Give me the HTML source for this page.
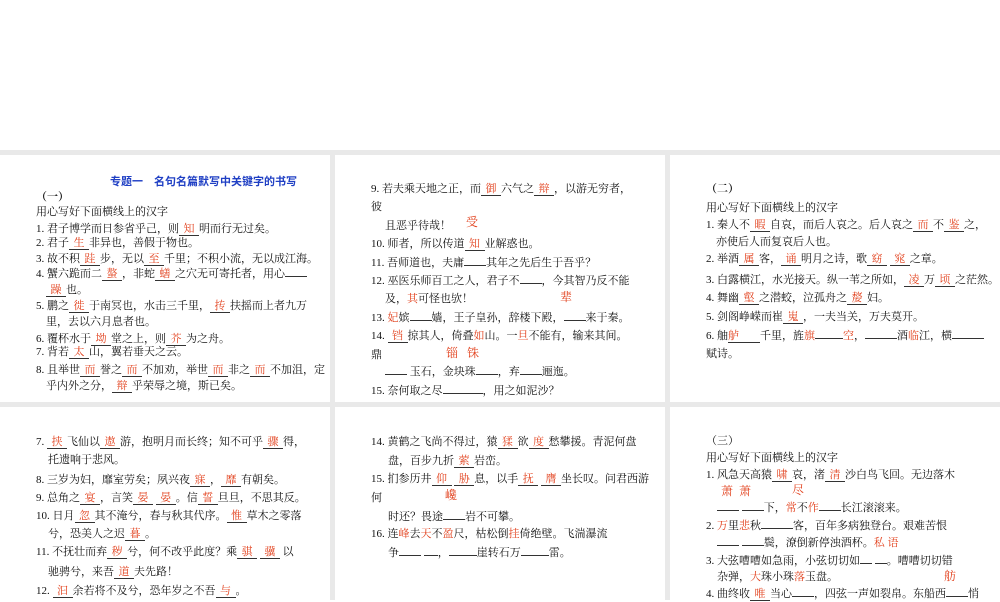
<!DOCTYPE html>
<html><head><meta charset="utf-8">
<style>
html,body{margin:0;padding:0;}
body{width:1000px;height:600px;position:relative;overflow:hidden;background:#fff;
font-family:"Liberation Serif","Noto Serif CJK SC","Noto Sans CJK SC",serif;font-size:11px;color:#111;}
.bg{position:absolute;left:0;top:150px;width:1000px;height:450px;background:#e9e9e9;}
.p{position:absolute;background:#fff;}
.l{position:absolute;white-space:nowrap;line-height:16px;height:16px;}
.r{color:#e2401c;}
.u{display:inline-block;border-bottom:1px solid #333;line-height:12px;padding:0 3px;min-width:14px;text-align:center;color:#e2401c;}
.b{display:inline-block;border-bottom:1px solid #333;line-height:12px;min-width:22px;}
.t{color:#1f3fc4;font-weight:bold;font-family:"Liberation Sans","Noto Sans CJK SC",sans-serif;}
</style></head><body>
<div class="bg"></div>
<div class="p" style="left:0;top:155px;width:330px;height:247px"></div>
<div class="p" style="left:335px;top:155px;width:330px;height:247px"></div>
<div class="p" style="left:670px;top:155px;width:330px;height:247px"></div>
<div class="p" style="left:0;top:407px;width:330px;height:193px"></div>
<div class="p" style="left:335px;top:407px;width:330px;height:193px"></div>
<div class="p" style="left:670px;top:407px;width:330px;height:193px"></div>

<!-- panel 1 -->
<div class="l t" style="left:110px;top:174px">专题一　名句名篇默写中关键字的书写</div>
<div class="l" style="left:36px;top:189px;font-weight:bold">（一）</div>
<div class="l" style="left:36px;top:204px">用心写好下面横线上的汉字</div>
<div class="l" style="left:36px;top:221px">1. 君子博学而日参省乎己，则<span class="u">知</span>明而行无过矣。</div>
<div class="l" style="left:36px;top:235px">2. 君子<span class="u">生</span>非异也，善假于物也。</div>
<div class="l" style="left:36px;top:251px">3. 故不积<span class="u">跬</span>步，无以<span class="u">至</span>千里；不积小流，无以成江海。</div>
<div class="l" style="left:36px;top:266px">4. 蟹六跪而二<span class="u">螯</span>，非蛇<span class="u">蟮</span>之穴无可寄托者，用心<span class="b"></span></div>
<div class="l" style="left:46px;top:282px"><span class="u">躁</span>也。</div>
<div class="l" style="left:36px;top:298px">5. 鹏之<span class="u">徙</span>于南冥也，水击三千里，<span class="u">抟</span>扶摇而上者九万</div>
<div class="l" style="left:46px;top:314px">里，去以六月息者也。</div>
<div class="l" style="left:36px;top:331px">6. 覆杯水于<span class="u">坳</span>堂之上，则<span class="u">芥</span>为之舟。</div>
<div class="l" style="left:36px;top:344px">7. 背若<span class="u">太</span>山，翼若垂天之云。</div>
<div class="l" style="left:36px;top:362px">8. 且举世<span class="u">而</span>誉之<span class="u">而</span>不加劝，举世<span class="u">而</span>非之<span class="u">而</span>不加沮，定</div>
<div class="l" style="left:46px;top:378px">乎内外之分，<span class="u">辩</span>乎荣辱之境，斯已矣。</div>

<!-- panel 2 -->
<div class="l" style="left:371px;top:181px">9. 若夫乘天地之正，而<span class="u">御</span>六气之<span class="u">辩</span>，以游无穷者，</div>
<div class="l" style="left:371px;top:199px">彼</div>
<div class="l" style="left:385px;top:218px">且恶乎待哉！</div>
<div class="l r" style="left:466px;top:214px;font-size:12px">受</div>
<div class="l" style="left:371px;top:236px">10. 师者，所以传道<span class="u">知</span>业解惑也。</div>
<div class="l" style="left:371px;top:255px">11. 吾师道也，夫庸<span class="b"></span>其年之先后生于吾乎？</div>
<div class="l" style="left:371px;top:273px">12. 巫医乐师百工之人，君子不<span class="b"></span>，今其智乃反不能</div>
<div class="l" style="left:385px;top:291px">及，<span class="r">其</span>可怪也欤！</div>
<div class="l r" style="left:560px;top:289px;font-size:12px">辈</div>
<div class="l" style="left:371px;top:310px">13. <span class="r">妃</span>嫔<span class="b"></span>嫱，王子皇孙，辞楼下殿，<span class="b"></span>来于秦。</div>
<div class="l" style="left:371px;top:328px">14. <span class="u">铛</span>掠其人，倚叠<span class="r">如</span>山。一<span class="r">旦</span>不能有，输来其间。</div>
<div class="l" style="left:371px;top:347px">鼎</div>
<div class="l r" style="left:446px;top:345px;font-size:12px">锱&nbsp;&nbsp;&nbsp;铢</div>
<div class="l" style="left:385px;top:364px"><span class="b"></span> 玉石，金块珠<span class="b"></span>，弃<span class="b"></span>逦迤。</div>
<div class="l" style="left:371px;top:383px">15. 奈何取之尽<span class="b" style="min-width:40px"></span>，用之如泥沙？</div>

<!-- panel 3 -->
<div class="l" style="left:706px;top:181px;font-weight:bold">（二）</div>
<div class="l" style="left:706px;top:200px">用心写好下面横线上的汉字</div>
<div class="l" style="left:706px;top:217px">1. 秦人不<span class="u">暇</span>自哀，而后人哀之。后人哀之<span class="u">而</span>不<span class="u">鉴</span>之，</div>
<div class="l" style="left:716px;top:234px">亦使后人而复哀后人也。</div>
<div class="l" style="left:706px;top:251px">2. 举酒<span class="u">属</span>客，<span class="u">诵</span>明月之诗，歌<span class="u">窈</span> <span class="u">窕</span>之章。</div>
<div class="l" style="left:706px;top:272px">3. 白露横江，水光接天。纵一苇之所如，<span class="u">凌</span>万<span class="u">顷</span>之茫然。</div>
<div class="l" style="left:706px;top:290px">4. 舞幽<span class="u">壑</span>之潜蛟，泣孤舟之<span class="u">嫠</span>妇。</div>
<div class="l" style="left:706px;top:309px">5. 剑阁峥嵘而崔<span class="u">嵬</span>，一夫当关，万夫莫开。</div>
<div class="l" style="left:706px;top:328px">6. 舳<span class="b" style="min-width:32px"><span class="r">舻</span></span>千里，旌<span class="r">旗</span><span class="b" style="min-width:28px"></span><span class="r">空</span>，<span class="b" style="min-width:32px"></span>酒<span class="r">临</span>江，横<span class="b" style="min-width:32px"></span></div>
<div class="l" style="left:706px;top:346px">赋诗。</div>

<!-- row 2 panel 1 -->
<div class="l" style="left:36px;top:434px">7. <span class="u">挟</span>飞仙以<span class="u">遨</span>游，抱明月而长终；知不可乎<span class="u">骤</span>得，</div>
<div class="l" style="left:48px;top:452px">托遗响于悲风。</div>
<div class="l" style="left:36px;top:472px">8. 三岁为妇，靡室劳矣；夙兴夜<span class="u">寐</span>，<span class="u">靡</span>有朝矣。</div>
<div class="l" style="left:36px;top:490px">9. 总角之<span class="u">宴</span>，言笑<span class="u">晏</span> <span class="u">晏</span>。信<span class="u">誓</span>旦旦，不思其反。</div>
<div class="l" style="left:36px;top:508px">10. 日月<span class="u">忽</span>其不淹兮，春与秋其代序。<span class="u">惟</span>草木之零落</div>
<div class="l" style="left:48px;top:526px">兮，恐美人之迟<span class="u">暮</span>。</div>
<div class="l" style="left:36px;top:544px">11. 不抚壮而弃<span class="u">秽</span>兮，何不改乎此度？乘<span class="u">骐</span> <span class="u">骥</span> 以</div>
<div class="l" style="left:48px;top:564px">驰骋兮，来吾<span class="u">道</span>夫先路！</div>
<div class="l" style="left:36px;top:583px">12. <span class="u">汩</span>余若将不及兮，恐年岁之不吾<span class="u">与</span>。</div>

<!-- row 2 panel 2 -->
<div class="l" style="left:371px;top:434px">14. 黄鹤之飞尚不得过，猿<span class="u">猱</span>欲<span class="u">度</span>愁攀援。青泥何盘</div>
<div class="l" style="left:388px;top:453px">盘，百步九折<span class="u">萦</span>岩峦。</div>
<div class="l" style="left:371px;top:471px">15. 扪参历井<span class="u">仰</span> <span class="u">胁</span>息，以手<span class="u">抚</span> <span class="u">膺</span>坐长叹。问君西游</div>
<div class="l" style="left:371px;top:490px">何</div>
<div class="l r" style="left:445px;top:487px;font-size:12px">巉</div>
<div class="l" style="left:388px;top:509px">时还？畏途<span class="b"></span>岩不可攀。</div>
<div class="l" style="left:371px;top:526px">16. 连<span class="r">峰</span>去<span class="r">天</span>不<span class="r">盈</span>尺，枯松倒<span class="r">挂</span>倚绝壁。飞湍瀑流</div>
<div class="l" style="left:388px;top:545px">争<span class="b"></span> <span class="b" style="min-width:14px"></span>，<span class="b" style="min-width:28px"></span>崖转石万<span class="b" style="min-width:28px"></span>雷。</div>

<!-- row 2 panel 3 -->
<div class="l" style="left:706px;top:433px">（三）</div>
<div class="l" style="left:706px;top:450px">用心写好下面横线上的汉字</div>
<div class="l" style="left:706px;top:467px">1. 风急天高猿<span class="u">啸</span>哀，渚<span class="u">清</span>沙白鸟飞回。无边落木</div>
<div class="l r" style="left:721px;top:483px;font-size:12px">萧&nbsp;&nbsp;萧</div>
<div class="l r" style="left:792px;top:482px;font-size:12px">尽</div>
<div class="l" style="left:717px;top:500px"><span class="b"></span> <span class="b"></span>下，<span class="r">常</span>不<span class="r">作</span><span class="b"></span>长江滚滚来。</div>
<div class="l" style="left:706px;top:518px">2. <span class="r">万</span>里<span class="r">悲</span>秋<span class="b" style="min-width:32px"></span>客，百年多病独登台。艰难苦恨</div>
<div class="l" style="left:717px;top:535px"><span class="b"></span> <span class="b"></span>鬓，潦倒新停浊酒杯。<span class="r">私 语</span></div>
<div class="l" style="left:706px;top:553px">3. 大弦嘈嘈如急雨，小弦切切如<span class="b" style="min-width:12px"></span> <span class="b" style="min-width:12px"></span>。嘈嘈切切错</div>
<div class="l" style="left:717px;top:569px">杂弹，<span class="r">大</span>珠小珠<span class="r">落</span>玉盘。</div>
<div class="l r" style="left:944px;top:568px;font-size:12px">舫</div>
<div class="l" style="left:706px;top:586px">4. 曲终收<span class="u">唯</span>当心<span class="b"></span>，四弦一声如裂帛。东船西<span class="b"></span>悄</div>
</body></html>
